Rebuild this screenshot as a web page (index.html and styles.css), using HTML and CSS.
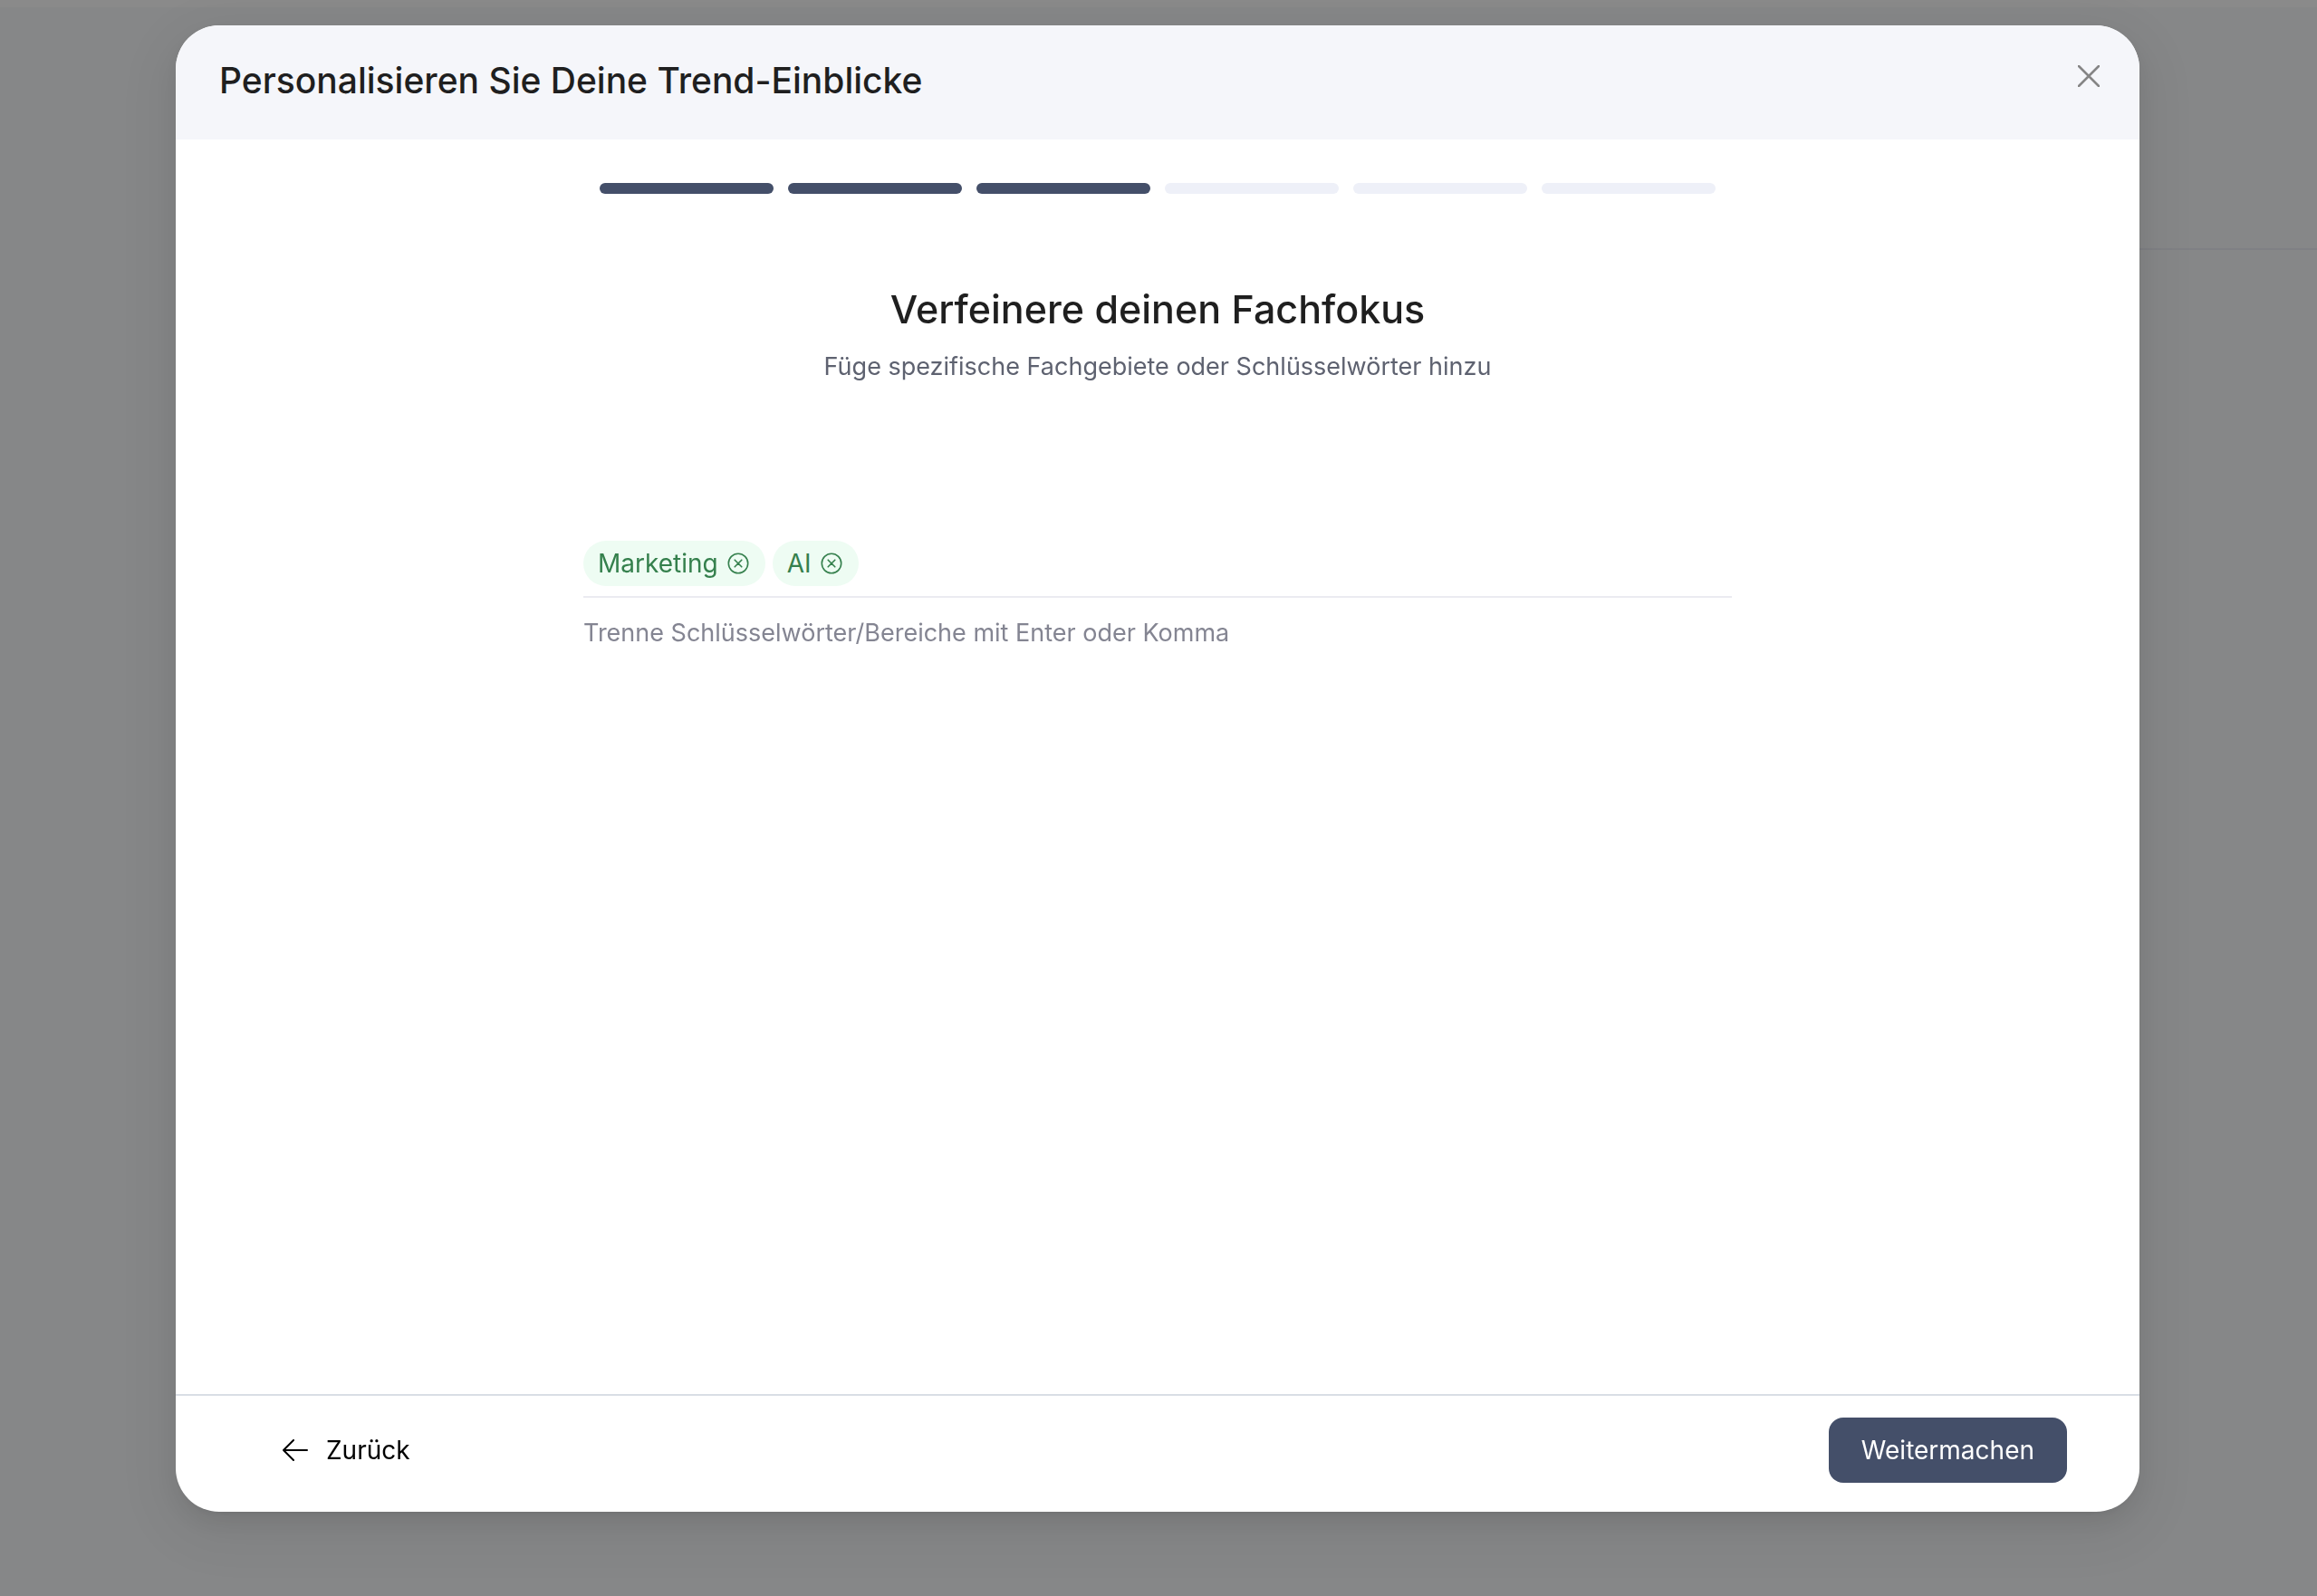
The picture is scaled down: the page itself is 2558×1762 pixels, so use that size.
FILE: index.html
```html
<!DOCTYPE html>
<html lang="de">

<head>
    <meta charset="UTF-8">
    <meta name="viewport" content="width=device-width, initial-scale=1.0">
    <title>Trend-Einblicke</title>
    <link rel="stylesheet" href="styles.css">
</head>

<body>
    <div class="page-top"></div>
    <div class="page-bar"></div>
    <div class="overlay">
        <div class="modal" role="dialog" aria-labelledby="modalTitle">
            <header class="modal-header">
                <h1 id="modalTitle">Personalisieren Sie Deine Trend-Einblicke</h1>
                <button type="button" class="close-button" aria-label="Schließen">
                    <svg width="24" height="24" viewBox="0 0 24 24">
                        <path d="M1 1L23 23M23 1L1 23" />
                    </svg>
                </button>
            </header>
            <main class="modal-body">
                <div class="steps">
                    <span class="step done"></span>
                    <span class="step done"></span>
                    <span class="step done"></span>
                    <span class="step"></span>
                    <span class="step"></span>
                    <span class="step"></span>
                </div>
                <h2>Verfeinere deinen Fachfokus</h2>
                <p class="subtitle">Füge spezifische Fachgebiete oder Schlüsselwörter hinzu</p>
                <div class="keywords">
                    <div class="keyword-field">
                        <span class="chip">Marketing
                            <button type="button" aria-label="Marketing entfernen">
                                <svg width="24" height="24" viewBox="0 0 24 24">
                                    <circle cx="12" cy="12" r="10.7" />
                                    <path d="M8.2 8.2L15.8 15.8M15.8 8.2L8.2 15.8" />
                                </svg>
                            </button>
                        </span>
                        <span class="chip">AI
                            <button type="button" aria-label="AI entfernen">
                                <svg width="24" height="24" viewBox="0 0 24 24">
                                    <circle cx="12" cy="12" r="10.7" />
                                    <path d="M8.2 8.2L15.8 15.8M15.8 8.2L8.2 15.8" />
                                </svg>
                            </button>
                        </span>
                        <input type="text" id="keyword" name="keyword">
                    </div>
                    <label for="keyword">Trenne Schlüsselwörter/Bereiche mit Enter oder Komma</label>
                </div>
            </main>
            <footer class="modal-footer">
                <button type="button" class="back-button">
                    <svg width="28" height="24" viewBox="0 0 28 24">
                        <path d="M27 12H1M12 1L1 12L12 23" />
                    </svg>
                    Zurück
                </button>
                <button type="button" class="next-button">Weitermachen</button>
            </footer>
        </div>
    </div>
</body>

</html>
```

FILE: styles.css
```css
* {
    box-sizing: border-box;
}

body {
    margin: 0;
    min-height: 100vh;
    background-color: #868788;
    font-family: "Inter", "Liberation Sans", sans-serif;
    font-size: 28px;
    line-height: 40px;
    color: #1f1f1f;
}

h1,
h2,
p {
    margin: 0;
}

button {
    border: none;
    padding: 0;
    background: none;
    font: inherit;
    color: inherit;
    cursor: pointer;
}

svg {
    display: block;
    fill: none;
    stroke: currentColor;
    stroke-width: 2;
    stroke-linecap: round;
    stroke-linejoin: round;
}

/* Dimmed page behind the dialog */
.page-top {
    height: 8px;
    background-color: #8a8a8a;
}

.page-bar {
    height: 268px;
    margin-left: 20%;
    border-bottom: 2px solid #7f8084;
}

.overlay {
    position: fixed;
    inset: 0;
    display: flex;
    padding: 28px 196px 93px 194px;
}

.modal {
    flex: 1;
    display: flex;
    flex-direction: column;
    background-color: #fff;
    border-radius: 48px;
    overflow: hidden;
    box-shadow: 0 12px 32px rgba(0, 0, 0, 0.08),
        0 6px 12px -8px rgba(0, 0, 0, 0.12),
        0 18px 56px 16px rgba(0, 0, 0, 0.05);
}

.modal-header {
    display: flex;
    justify-content: space-between;
    align-items: flex-start;
    padding: 36px 44px 40px 48px;
    background-color: #f5f6fa;
}

h1 {
    font-size: 39px;
    line-height: 50px;
    font-weight: 500;
}

.close-button {
    margin-top: 8px;
    color: #858585;
}

.close-button svg {
    stroke-width: 2.5;
}

.modal-body {
    flex: 1;
    display: flex;
    flex-direction: column;
    align-items: center;
    padding: 48px;
    text-align: center;
}

.steps {
    display: flex;
    gap: 16px;
    width: 100%;
    max-width: 1232px;
}

.step {
    flex: 1;
    height: 12px;
    border-radius: 6px;
    background-color: #eef0f8;
}

.step.done {
    background-color: #444f69;
}

h2 {
    margin-top: 97px;
    font-size: 43px;
    line-height: 60px;
    font-weight: 500;
}

.subtitle {
    margin-top: 14px;
    font-size: 27px;
    color: #5e6270;
}

.keywords {
    width: 100%;
    max-width: 1268px;
    margin-top: 172px;
    text-align: left;
}

.keyword-field {
    display: flex;
    gap: 8px;
    padding-bottom: 11px;
    border-bottom: 2px solid #ebebf1;
}

.chip {
    display: flex;
    align-items: center;
    gap: 10px;
    height: 50px;
    padding: 0 18px 0 16px;
    border-radius: 25px;
    background-color: #eefcf3;
    color: #35804d;
}

.chip svg {
    stroke-width: 1.6;
}

.keyword-field input {
    flex: 1;
    min-width: 0;
    border: none;
    outline: none;
    background: none;
    font: inherit;
}

.keywords label {
    display: block;
    margin-top: 19px;
    font-size: 27px;
    color: #848592;
}

.modal-footer {
    display: flex;
    justify-content: space-between;
    align-items: center;
    padding: 24px 80px 32px 118px;
    border-top: 2px solid #d9dee5;
}

.back-button {
    display: flex;
    align-items: center;
    gap: 20px;
    color: #000;
}

.next-button {
    height: 72px;
    padding: 0 36px;
    border-radius: 16px;
    background-color: #444f69;
    color: #fff;
}
```
